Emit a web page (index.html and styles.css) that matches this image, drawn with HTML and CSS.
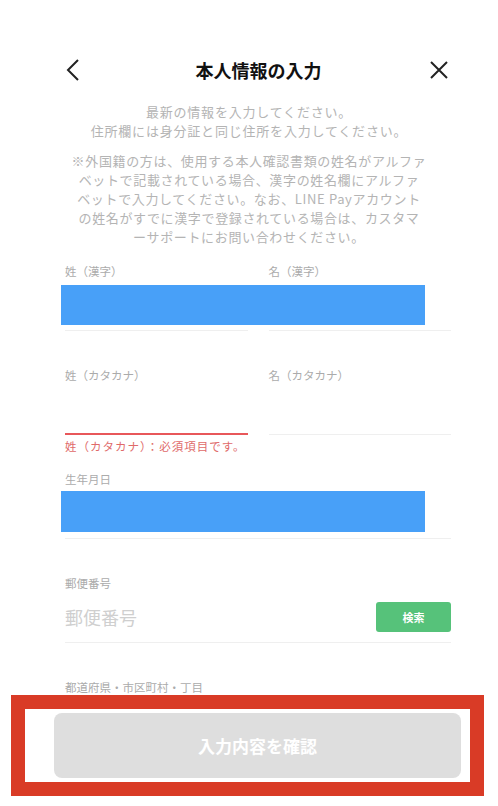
FILE: index.html
```html
<!DOCTYPE html>
<html lang="ja">
<head>
    <meta charset="UTF-8">
    <title>本人情報の入力</title>
    <link rel="stylesheet" href="styles.css">
</head>
<body>
<div class="page">
    <div class="header">
        <span class="icon-btn">
            <svg width="14" height="22" viewBox="0 0 14 22"><polyline points="12,1 2,11 12,21" fill="none" stroke="#222" stroke-width="2"/></svg>
        </span>
        <h1 class="title">本人情報の入力</h1>
        <span class="icon-btn">
            <svg width="20" height="20" viewBox="0 0 20 20"><path d="M2 2 L18 18 M18 2 L2 18" fill="none" stroke="#222" stroke-width="2"/></svg>
        </span>
    </div>

    <p class="intro">最新の情報を入力してください。<br>住所欄には身分証と同じ住所を入力してください。</p>
    <p class="note">※外国籍の方は、使用する本人確認書類の姓名がアルファ<br>ベットで記載されている場合、漢字の姓名欄にアルファ<br>ベットで入力してください。なお、LINE Payアカウント<br>の姓名がすでに漢字で登録されている場合は、カスタマ<br>ーサポートにお問い合わせください。</p>

    <div class="form">
        <div class="row">
            <div class="field">
                <label class="label">姓（漢字）</label>
                <div class="input"></div>
                <div class="error"></div>
            </div>
            <div class="field">
                <label class="label">名（漢字）</label>
                <div class="input"></div>
                <div class="error"></div>
            </div>
            <div class="mask mask-name"></div>
        </div>

        <div class="row">
            <div class="field">
                <label class="label">姓（カタカナ）</label>
                <div class="input input-error"></div>
                <div class="error">姓（カタカナ）：必須項目です。</div>
            </div>
            <div class="field">
                <label class="label">名（カタカナ）</label>
                <div class="input"></div>
                <div class="error"></div>
            </div>
        </div>

        <div class="row">
            <div class="field">
                <label class="label">生年月日</label>
                <div class="input"></div>
                <div class="error"></div>
            </div>
            <div class="mask mask-birth"></div>
        </div>

        <div class="row">
            <div class="field">
                <label class="label">郵便番号</label>
                <div class="input">
                    <span class="placeholder">郵便番号</span>
                    <button class="search-btn">検索</button>
                </div>
                <div class="error"></div>
            </div>
        </div>

        <div class="row">
            <div class="field">
                <label class="label">都道府県・市区町村・丁目</label>
                <div class="input"></div>
            </div>
        </div>
    </div>
</div>

<div class="footer">
    <button class="submit-btn">入力内容を確認</button>
</div>
<div class="highlight"></div>
</body>
</html>
```

FILE: styles.css
```css
* {
    margin: 0;
    padding: 0;
    box-sizing: border-box;
}
body {
    font-family: "Noto Sans CJK JP", "Noto Sans", sans-serif;
    background: #fff;
    color: #222;
    overflow: hidden;
}
.header {
    margin-top: 50px;
    height: 40px;
    padding: 0 49px 0 66px;
    display: flex;
    align-items: center;
    justify-content: space-between;
}
.icon-btn {
    display: flex;
    align-items: center;
}
.title {
    font-size: 18px;
    font-weight: bold;
    color: #111;
    margin-left: 8px;
}
.intro {
    margin-top: 13px;
    text-align: center;
    font-size: 13px;
    line-height: 18.5px;
    letter-spacing: 0.8px;
    color: #b4b4b4;
}
.note {
    margin-top: 11px;
    text-align: center;
    font-size: 13px;
    line-height: 19px;
    letter-spacing: 0.65px;
    color: #b4b4b4;
}
.form {
    padding: 17px 47px 0 65px;
}
.row {
    position: relative;
    display: flex;
    gap: 21px;
}
.field {
    flex: 1;
}
.label {
    display: block;
    font-size: 11.5px;
    line-height: 16px;
    color: #ababab;
}
.input {
    height: 52px;
    border-bottom: 1px solid #efefef;
    display: flex;
    align-items: center;
    justify-content: space-between;
}
.input-error {
    border-bottom: 2px solid #e8575a;
}
.error {
    height: 19px;
    padding-top: 3px;
    margin-bottom: 17px;
    font-size: 11.5px;
    line-height: 16px;
    letter-spacing: 1px;
    color: #e06a6a;
}
.placeholder {
    font-size: 18px;
    color: #cfcfcf;
}
.search-btn {
    width: 75px;
    height: 30px;
    border: none;
    border-radius: 3px;
    background: #56c27a;
    color: #fff;
    font-family: inherit;
    font-size: 11px;
    font-weight: bold;
}
.mask {
    position: absolute;
    left: -4px;
    width: 364px;
    background: #48a0f8;
}
.mask-name {
    top: 22px;
    height: 40px;
}
.mask-birth {
    top: 20px;
    height: 41px;
}
.footer {
    position: fixed;
    left: 0;
    right: 0;
    bottom: 0;
    padding: 13px 37px 28px 54px;
    background: #fff;
}
.submit-btn {
    width: 100%;
    height: 65px;
    border: none;
    border-radius: 8px;
    background: #dedede;
    color: #fff;
    font-family: inherit;
    font-size: 17px;
    font-weight: bold;
}
.highlight {
    position: fixed;
    left: 11px;
    bottom: 10px;
    width: 473px;
    height: 101px;
    border: 14px solid #d93b26;
}
```
